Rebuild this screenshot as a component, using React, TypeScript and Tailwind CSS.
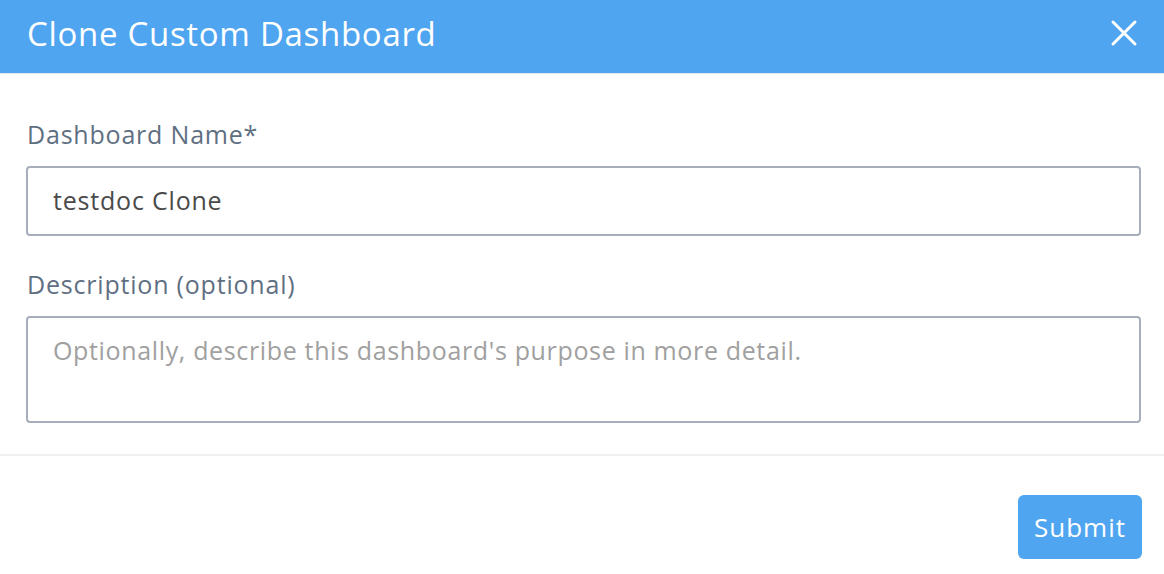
import React from "react";

export default function App() {
  return (
    <div className="w-[1164px] h-[574px] bg-white flex flex-col overflow-hidden" style={{ fontFamily: '"Open Sans", "Noto Sans", sans-serif' }}>
      <div className="h-[74px] bg-[#50a5f0] border-b border-[#e3e6ea] flex items-center justify-between pl-[27px] pr-[26px] pb-[7px] shrink-0">
        <h1 className="text-white text-[33px] tracking-[0.7px] leading-none font-normal">Clone Custom Dashboard</h1>
        <svg width="28" height="28" viewBox="0 0 28 28" fill="none" stroke="white" strokeWidth="3" strokeLinecap="round">
          <path d="M3 3 L25 25 M25 3 L3 25" />
        </svg>
      </div>
      <div className="pl-[26px] pr-[23px] pt-[44px] flex flex-col">
        <label className="text-[25px] tracking-[0.8px] leading-[32px] text-[#5f6f82] pl-[1px]">Dashboard Name*</label>
        <div className="mt-[16px] h-[70px] border-2 border-[#a6aebb] rounded-[4px] flex items-center px-[25px] text-[25px] tracking-[0.8px] text-[#4a4a4a]">
          testdoc Clone
        </div>
        <label className="mt-[32px] text-[25px] tracking-[0.8px] leading-[32px] text-[#5f6f82] pl-[1px]">Description (optional)</label>
        <div className="mt-[16px] h-[107px] border-2 border-[#a6aebb] rounded-[4px] px-[25px] pt-[14px] text-[25px] tracking-[0.65px] text-[#a0a0a0]">
          Optionally, describe this dashboard's purpose in more detail.
        </div>
      </div>
      <div className="mt-[31px] border-t-2 border-[#f0f0f0]" />
      <div className="flex justify-end pr-[22px] pt-[39px]">
        <button className="w-[124px] h-[64px] bg-[#50a5f0] rounded-[6px] text-white text-[26px] tracking-[1px]">Submit</button>
      </div>
    </div>
  );
}
